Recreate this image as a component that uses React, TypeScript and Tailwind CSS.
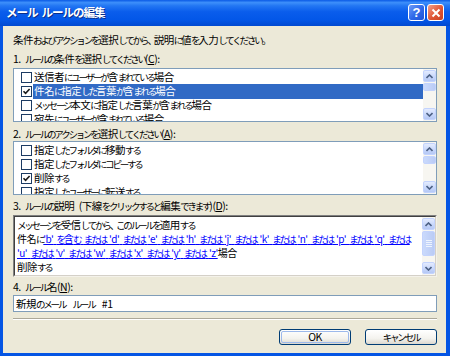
import React from "react";

const font = "font-['Noto_Sans_CJK_JP','Noto_Sans',sans-serif] tracking-[-0.5px] [word-spacing:2.5px]";

// MS UI Gothic has narrow kana; squeeze kana and punctuation runs to match
const runClass: Record<string, string> = {
  kana: "text-[9.5px] tracking-[-2.2px]",
  punct: "tracking-[-4px]",
  space: "",
  other: "",
};

const kindOf = (ch: string) => {
  if (ch === " ") return "space";
  if (/[\u3001\u3002]/.test(ch)) return "punct";
  if (/[\u3040-\u30FF]/.test(ch)) return "kana";
  return "other";
};

const Jp: React.FC<{ text: string; spaceClass?: string }> = ({ text, spaceClass }) => {
  const parts: { t: string; k: string }[] = [];
  for (const ch of text) {
    const k = kindOf(ch);
    const last = parts[parts.length - 1];
    if (last && last.k === k) last.t += ch;
    else parts.push({ t: ch, k });
  }
  return (
    <>
      {parts.map((p, i) => (
        <span key={i} className={p.k === "space" && spaceClass ? spaceClass : runClass[p.k]}>
          {p.t}
        </span>
      ))}
    </>
  );
};

const ArrowUp = () => (
  <svg width="7" height="5" viewBox="0 0 7 5">
    <path d="M0.5 4 L3.5 1 L6.5 4" fill="none" stroke="#4D6185" strokeWidth="1.6" />
  </svg>
);

const ArrowDown = () => (
  <svg width="7" height="5" viewBox="0 0 7 5">
    <path d="M0.5 1 L3.5 4 L6.5 1" fill="none" stroke="#4D6185" strokeWidth="1.6" />
  </svg>
);

const ScrollButton: React.FC<{ down?: boolean }> = ({ down }) => (
  <div className="h-[12px] w-[13px] shrink-0 rounded-[2px] border border-[#C3D3FD] bg-[linear-gradient(to_bottom,#E3EBFE,#C6D6FB_60%,#B5C8F5)] flex items-center justify-center">
    {down ? <ArrowDown /> : <ArrowUp />}
  </div>
);

const ScrollBar: React.FC<{ thumb: number }> = ({ thumb }) => (
  <div className="w-[13px] shrink-0 flex flex-col bg-[#F7F6F1] py-[1px]">
    <ScrollButton />
    <div className="flex-1 flex flex-col pt-[1px]">
      <div
        className="w-[13px] rounded-[2px] border border-[#C3D3FD] bg-[linear-gradient(to_right,#CADAFC,#BACBF5)] flex flex-col items-center justify-center gap-[1px]"
        style={{ height: thumb }}
      >
        {thumb > 16 && (
          <>
            <div className="w-[6px] h-[1px] bg-[#EEF4FE]" />
            <div className="w-[6px] h-[1px] bg-[#EEF4FE]" />
            <div className="w-[6px] h-[1px] bg-[#EEF4FE]" />
            <div className="w-[6px] h-[1px] bg-[#EEF4FE]" />
          </>
        )}
      </div>
    </div>
    <ScrollButton down />
  </div>
);

const Check: React.FC<{ checked?: boolean }> = ({ checked }) => (
  <div className="w-[11px] h-[11px] shrink-0 border border-[#1C3B63] bg-white flex items-center justify-center">
    {checked && (
      <svg width="9" height="9" viewBox="0 0 9 9">
        <path d="M1.5 4.2 L3.6 6.4 L7.6 2" fill="none" stroke="#1A1A1A" strokeWidth="1.6" />
      </svg>
    )}
  </div>
);

const Row: React.FC<{ label: string; checked?: boolean; selected?: boolean }> = ({
  label,
  checked,
  selected,
}) => (
  <div className="h-[14px] flex items-center shrink-0">
    <div className="w-[19px] flex justify-end pr-[1px]">
      <Check checked={checked} />
    </div>
    <div
      className={
        selected
          ? "flex-1 h-[15px] flex items-center pl-[1px] bg-[#316AC5] text-white"
          : "flex-1 h-[14px] flex items-center pl-[1px] text-black"
      }
    >
      <span className="whitespace-nowrap">
        <Jp text={label} />
      </span>
    </div>
  </div>
);

const ListBox: React.FC<{ rows: { label: string; checked?: boolean; selected?: boolean }[] }> = ({ rows }) => (
  <div className="h-[54px] border border-[#7F9DB9] bg-white flex overflow-hidden">
    <div className="flex-1 flex flex-col overflow-hidden pt-[1px]">
      {rows.map((r) => (
        <Row key={r.label} {...r} />
      ))}
    </div>
    <ScrollBar thumb={8} />
  </div>
);

const Label: React.FC<{ children: React.ReactNode; className?: string }> = ({ children, className }) => (
  <div className={"h-[14px] leading-[14px] whitespace-nowrap text-black " + (className ?? "")}>{children}</div>
);

const XpButton: React.FC<{ children: React.ReactNode; isDefault?: boolean }> = ({ children, isDefault }) => (
  <div className="w-[72px] h-[16px] rounded-[3px] border border-[#003C74] bg-[linear-gradient(to_bottom,#FFFFFF,#F4F3EE_60%,#DCD8CF)] p-[1px]">
    <div
      className={
        isDefault
          ? "h-full rounded-[2px] border border-[#9DB9EB] flex items-center justify-center text-black leading-none"
          : "h-full rounded-[2px] flex items-center justify-center text-black leading-none"
      }
    >
      <span>{children}</span>
    </div>
  </div>
);

export default function App() {
  return (
    <div className={"w-[450px] h-[356px] flex flex-col bg-[#0455E4] text-[10.5px] " + font}>
      {/* title bar */}
      <div className="h-[26px] shrink-0 flex items-center pl-[6px] pr-[6px] bg-[linear-gradient(to_bottom,#0A5AE6_0%,#3D8FFA_10%,#2377F3_22%,#0A5DEC_45%,#0357E8_75%,#0149D0_100%)]">
        <span className="text-white font-bold text-[11.5px] tracking-[-1px] leading-none [text-shadow:1px_1px_0_#0A2E8A]">
          メール ルールの編集
        </span>
        <div className="ml-auto flex gap-[2px] mt-[-1px]">
          <div className="w-[17px] h-[17px] rounded-[3px] border border-white bg-[linear-gradient(135deg,#6E9BF8,#2D67E8_55%,#1E52D6)] flex items-center justify-center">
            <span className="text-white font-bold text-[13px] tracking-normal leading-none font-['Liberation_Sans',sans-serif]">?</span>
          </div>
          <div className="w-[17px] h-[17px] rounded-[3px] border border-white bg-[linear-gradient(135deg,#F2A08A,#DF5535_55%,#C9401F)] flex items-center justify-center">
            <svg width="10" height="10" viewBox="0 0 10 10">
              <path d="M1.5 1.5 L8.5 8.5 M8.5 1.5 L1.5 8.5" stroke="white" strokeWidth="2" />
            </svg>
          </div>
        </div>
      </div>

      {/* body */}
      <div className="flex-1 ml-[3px] mr-[4px] mb-[3px] bg-[#ECE9D8] pl-[10px] pr-[9px] pt-[7px] flex flex-col">
        <Label>
          <Jp text="条件およびアクションを選択してから、説明に値を入力してください。" />
        </Label>

        <Label className="mt-[5px]">
          <Jp text="1. ルールの条件を選択してください(" />
          <u>C</u>):
        </Label>
        <div className="mt-[2px]">
          <ListBox
            rows={[
              { label: "送信者にユーザーが含まれている場合" },
              { label: "件名に指定した言葉が含まれる場合", checked: true, selected: true },
              { label: "メッセージ本文に指定した言葉が含まれる場合" },
              { label: "宛先にユーザーが含まれている場合" },
            ]}
          />
        </div>

        <Label className="mt-[5px]">
          <Jp text="2. ルールのアクションを選択してください(" />
          <u>A</u>):
        </Label>
        <div>
          <ListBox
            rows={[
              { label: "指定したフォルダに移動する" },
              { label: "指定したフォルダにコピーする" },
              { label: "削除する", checked: true },
              { label: "指定したユーザーに転送する" },
            ]}
          />
        </div>

        <Label className="mt-[4px]">
          <Jp text="3. ルールの説明 (下線をクリックすると編集できます)(" />
          <u>D</u>):
        </Label>
        <div className="mt-[2px] h-[62px] border border-[#808080] border-r-[#F4F2EA] border-b-[#F4F2EA]">
          <div className="h-full border border-[#404040] border-r-[#D4D0C8] border-b-[#D4D0C8] bg-white flex overflow-hidden">
            <div className="flex-1 pl-[2px] pt-[1px] overflow-hidden text-black">
              <div className="h-[14px] leading-[14px] whitespace-nowrap">
                <Jp text="メッセージを受信してから、このルールを適用する" />
              </div>
              <div className="h-[14px] leading-[14px] whitespace-nowrap text-[10px] [word-spacing:1.5px]">
                <Jp text="件名に" />
                <span className="text-[#0000FF] underline">
                  <Jp text="'b' を含む または 'd' または 'e' または 'h' または 'j' または 'k' または 'n' または 'p' または 'q' または" />
                </span>
              </div>
              <div className="h-[14px] leading-[14px] whitespace-nowrap text-[10px] [word-spacing:1.5px]">
                <span className="text-[#0000FF] underline">
                  <Jp text="'u' または 'v' または 'w' または 'x' または 'y' または 'z'" />
                </span>
                <Jp text="場合" />
              </div>
              <div className="h-[14px] leading-[14px] whitespace-nowrap">
                <Jp text="削除する" />
              </div>
            </div>
            <ScrollBar thumb={25} />
          </div>
        </div>

        <Label className="mt-[3px]">
          <Jp text="4. ルール名(" />
          <u>N</u>):
        </Label>
        <div className="mt-[1px] h-[17px] border border-[#7F9DB9] bg-white flex items-center pl-[2px] text-black whitespace-nowrap">
          <span>
            <Jp text="新規のメール ルール #1" spaceClass="tracking-[2.5px]" />
          </span>
        </div>

        <div className="mt-[6px] h-[2px] border-t border-[#ACA899] border-b border-b-white" />

        <div className="mt-[9px] flex justify-end gap-[14px]">
          <XpButton isDefault>OK</XpButton>
          <XpButton>
            <Jp text="キャンセル" />
          </XpButton>
        </div>
      </div>
    </div>
  );
}
